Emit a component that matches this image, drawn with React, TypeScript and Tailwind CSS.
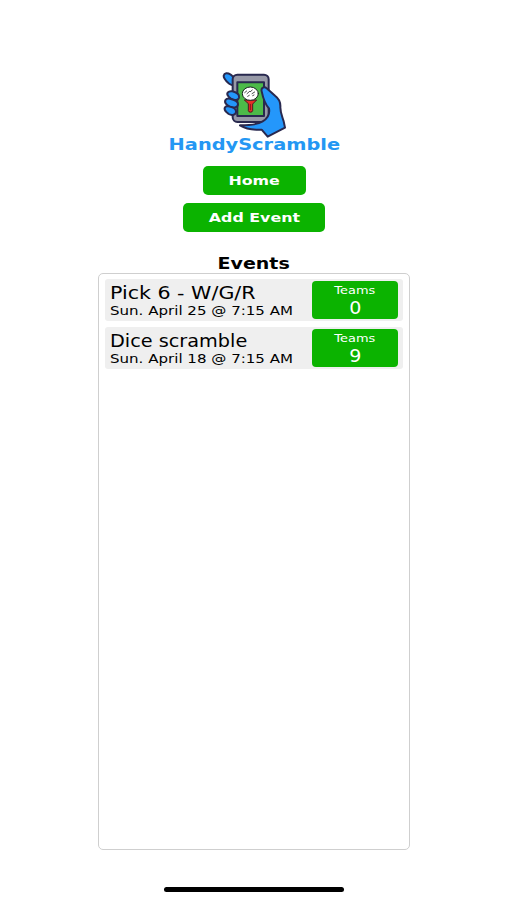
const events = [
  { name: 'Pick 6 - W/G/R', date: 'Sun. April 25 @ 7:15 AM', teams: 0, stretch: 'scale-x-[1.219]' },
  { name: 'Dice scramble', date: 'Sun. April 18 @ 7:15 AM', teams: 9, stretch: 'scale-x-[1.14]' },
];

const Logo = () => (
  <svg viewBox="0 0 228 228" className="h-[76px] w-[76px]" strokeLinejoin="round" strokeLinecap="round">
    <g stroke="#29294f" strokeWidth="6">
      <path
        d="M58 60C49 58 42 56 38 52C29 44 22 36 23 29C25 20 35 20 43 25C50 29 53 37 62 42Z"
        fill="#2497fb"
      />
      <rect x="50" y="26" width="108" height="142" rx="14" fill="#9799a7" />
      <path d="M64 49H144V150H64Z" fill="#4cba49" />
      <path
        d="M137 76C134 66 145 60 152 67L178 90C190 99 194 111 193 124C193 140 199 152 203 166L207 185L155 212L137 191C118 192 90 189 72 178C100 178 126 175 140 166C154 158 162 144 159 127C148 116 142 100 137 76Z"
        fill="#2497fb"
      />
      <path d="M38 92C28 81 38 74 49 76C61 79 71 86 69 95C67 103 56 104 46 99Z" fill="#2497fb" />
      <path d="M32 116C21 104 31 95 42 98C54 101 67 107 66 115C65 125 51 127 40 122Z" fill="#2497fb" />
      <path d="M32 139C21 129 26 119 37 121C49 123 60 129 60 136C61 147 47 149 38 144Z" fill="#2497fb" />
    </g>
    <path d="M86 102H122L110 114V134C110 140 97 140 97 134V114Z" fill="#e62d28" stroke="#4b1b20" strokeWidth="3" />
    <path d="M103 115V131" stroke="#82161c" strokeWidth="3" />
    <ellipse cx="103" cy="83" rx="24" ry="20" fill="#fff" stroke="#182220" strokeWidth="3" />
    <g stroke="#252a2a" strokeWidth="2.5">
      <path d="M86 80L92 75M93 83L101 76M103 77L109 72M108 83L116 78M95 91L100 88M110 89L114 87" />
    </g>
  </svg>
);

export default function App() {
  return (
    <div className="flex h-[900px] w-[507px] flex-col items-center bg-white pt-[66px] pl-px font-['DejaVu_Sans',Verdana,sans-serif] text-black">
      <div className="flex h-[100px] flex-col items-center">
        <Logo />
        <h1 className="-mt-[8px] scale-x-[1.219] text-[15.9px] leading-[22px] font-bold text-[#2497f3]">
          HandyScramble
        </h1>
      </div>
      <button className="flex h-[29px] w-[103px] items-center justify-center rounded-[5px] bg-[#0bb300] text-white">
        <span className="scale-x-[1.219] text-[13px] font-bold">Home</span>
      </button>
      <button className="mt-2 flex h-[29px] w-[142px] items-center justify-center rounded-[5px] bg-[#0bb300] text-white">
        <span className="scale-x-[1.219] pt-px text-[13px] font-bold whitespace-nowrap">Add Event</span>
      </button>
      <h2 className="mt-[22px] -mb-px scale-x-[1.219] text-[15.6px] leading-5 font-bold">Events</h2>
      <div className="flex h-[577px] w-[312px] flex-col gap-1.5 rounded-[5px] border border-[#cfcfcf] px-1.5 pt-[5px]">
        {events.map((event) => (
          <div
            key={event.name}
            className="flex h-[42px] items-center justify-between rounded-[3px] bg-[#efefef] pr-[5px] pl-[5px]"
          >
            <div className="flex flex-col items-start pt-0.5 whitespace-nowrap">
              <span className={`origin-left text-[16.9px] leading-5 ${event.stretch}`}>{event.name}</span>
              <span className="origin-left scale-x-[1.219] text-[12.35px] leading-4">{event.date}</span>
            </div>
            <button className="flex h-[38px] w-[86px] flex-col items-center rounded-[4px] bg-[#0bb300] pt-0.5 text-white">
              <span className="scale-x-[1.219] text-[10.6px] leading-[14px]">Teams</span>
              <span className="scale-x-[1.12] text-[17px] leading-[23px]">{event.teams}</span>
            </button>
          </div>
        ))}
      </div>
      <div className="mt-[37px] h-[5px] w-[180px] rounded-full bg-black" />
    </div>
  );
}
